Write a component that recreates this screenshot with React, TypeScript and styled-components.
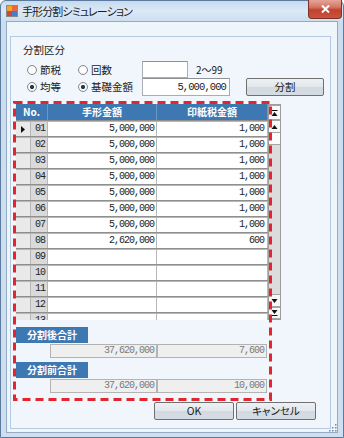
import React from "react";
import styled, { createGlobalStyle } from "styled-components";

const GlobalStyle = createGlobalStyle`
  html, body { margin: 0; padding: 0; background: #ffffff; }
  body { font-family: "Noto Sans CJK JP", "Noto Sans", sans-serif; }
  * { box-sizing: border-box; }
`;

const Window = styled.div`
  width: 344px;
  height: 438px;
  border: 1px solid #5d7b9c;
  border-radius: 6px 6px 0 0;
  background: linear-gradient(180deg, #c6daee 0px, #dce9f6 10px, #cbddef 21px, #cfdff0 100%);
  display: flex;
  flex-direction: column;
  padding: 0 5px 4px 5px;
`;

const TitleBar = styled.div`
  height: 20px;
  display: flex;
  align-items: center;
`;

const TitleText = styled.div`
  margin-left: 4px;
  font-size: 11px;
  line-height: 14px;
  letter-spacing: -0.9px;
  color: #1b1b1b;
  font-feature-settings: "palt";
`;

const CloseButton = styled.div`
  margin-left: auto;
  margin-right: -4px;
  align-self: flex-start;
  margin-top: -1px;
  width: 34px;
  height: 19px;
  border: 1px solid #7b3327;
  border-top: none;
  border-radius: 0 0 4px 4px;
  background: linear-gradient(180deg, #e6a596 0%, #d47665 40%, #c2412f 55%, #c9533e 100%);
  display: flex;
  align-items: center;
  justify-content: center;
`;

const Client = styled.div`
  flex: 1;
  position: relative;
  border: 1px solid #93abc5;
  background: #eef5fb;
  padding: 14px 6px 3px 3px;
  display: flex;
`;

const Panel = styled.div`
  flex: 1;
  border: 1px solid #b3cae2;
  background: #f0f6fc;
  display: flex;
  flex-direction: column;
`;

const GroupLabel = styled.div`
  margin: 6px 0 0 12px;
  font-size: 10.5px;
  line-height: 14px;
  color: #1b1b1b;
`;

const OptionRow = styled.div<{ $h: number; $top?: number }>`
  display: flex;
  align-items: center;
  height: ${(p) => p.$h}px;
  margin: ${(p) => p.$top ?? 0}px 0 0 16px;
`;

const Radio = styled.div<{ $w: number }>`
  width: ${(p) => p.$w}px;
  display: flex;
  align-items: center;
  gap: 3px;
  font-size: 10.5px;
  line-height: 14px;
  color: #1b1b1b;
`;

const RadioMark = styled.span<{ $checked?: boolean }>`
  width: 10px;
  height: 10px;
  border-radius: 50%;
  border: 1px solid #8a8a8a;
  background: ${(p) =>
    p.$checked
      ? "radial-gradient(circle, #24384f 0 1.8px, #ffffff 2.4px, #e4e4e4 100%)"
      : "radial-gradient(circle, #ffffff 40%, #e4e4e4 100%)"};
`;

const TextBox = styled.div<{ $w: number; $h: number }>`
  width: ${(p) => p.$w}px;
  height: ${(p) => p.$h}px;
  border: 1px solid #abadb3;
  border-top-color: #8f9196;
  background: #ffffff;
  font-family: "Liberation Mono", monospace;
  font-size: 10.5px;
  letter-spacing: -0.9px;
  line-height: ${(p) => p.$h - 2}px;
  text-align: right;
  padding-right: 3px;
  color: #1b1b1b;
`;

const Hint = styled.div`
  margin-left: 8px;
  font-size: 10px;
  color: #1b1b1b;
`;

const Button = styled.div<{ $w: number; $ml?: number }>`
  width: ${(p) => p.$w}px;
  height: 18px;
  margin-left: ${(p) => p.$ml ?? 0}px;
  border: 1px solid #707070;
  border-radius: 2px;
  background: linear-gradient(180deg, #eef1f4 0%, #e2e7ec 50%, #d3d9e0 51%, #d6dce3 100%);
  font-size: 10.5px;
  line-height: 16px;
  text-align: center;
  color: #1b1b1b;
  font-feature-settings: "palt";
`;

const DataArea = styled.div`
  position: relative;
  margin: 8px 0 0 5px;
  display: flex;
  flex-direction: column;
`;

const GridWrap = styled.div`
  display: flex;
  height: 216px;
`;

const Table = styled.div`
  width: 252px;
  height: 216px;
  overflow: hidden;
  background: #ffffff;
`;

const HeaderRow = styled.div`
  display: grid;
  grid-template-columns: 31px 108px 110px;
  column-gap: 1px;
  height: 16px;
  background: #6d97c3;
`;

const HeaderCell = styled.div`
  background: #3e78b3;
  color: #ffffff;
  font-weight: bold;
  font-size: 10px;
  line-height: 16px;
  text-align: center;
`;

const Row = styled.div`
  display: grid;
  grid-template-columns: 14px 16px 108px 110px;
  column-gap: 1px;
  height: 16px;
  border-top: 1px solid #8f8f8f;
  padding-top: 1px;
  background: #b7b7b7;
`;

const Indicator = styled.div`
  background: #e9e9e9;
  display: flex;
  align-items: center;
  justify-content: center;
`;

const NoCell = styled.div`
  background: #dadada;
  font-family: "Liberation Mono", monospace;
  font-size: 10px;
  letter-spacing: -1px;
  line-height: 14px;
  padding-left: 4px;
  color: #222222;
`;

const AmountCell = styled.div<{ $pad: number }>`
  background: #ffffff;
  font-family: "Liberation Mono", monospace;
  font-size: 10px;
  letter-spacing: -1px;
  line-height: 14px;
  text-align: right;
  padding-right: ${(p) => p.$pad}px;
  color: #222222;
`;

const ScrollBar = styled.div`
  width: 13px;
  height: 216px;
  border: 1px solid #9c9c9c;
  background: #dcdcdc;
  display: flex;
  flex-direction: column;
`;

const ScrollButton = styled.div<{ $h: number }>`
  height: ${(p) => p.$h}px;
  border-bottom: 1px solid #a6a6a6;
  border-top: 1px solid #a6a6a6;
  background: #f7f7f7;
  display: flex;
  align-items: center;
  justify-content: center;
`;

const ScrollThumb = styled.div`
  height: 12px;
  background: #fbfbfb;
  border-bottom: 1px solid #a6a6a6;
`;

const ScrollTrack = styled.div`
  flex: 1;
`;

const TotalLabel = styled.div<{ $top: number }>`
  width: 72px;
  height: 16px;
  margin-top: ${(p) => p.$top}px;
  background: #3e78b3;
  color: #ffffff;
  font-weight: bold;
  font-size: 10px;
  line-height: 16px;
  text-align: center;
`;

const TotalRow = styled.div`
  display: flex;
  margin: 1px 0 0 34px;
`;

const TotalBox = styled.div<{ $w: number }>`
  width: ${(p) => p.$w}px;
  height: 14px;
  border: 1px solid #b3b3b3;
  background: #efefef;
  font-family: "Liberation Mono", monospace;
  font-size: 10px;
  letter-spacing: -1px;
  line-height: 12px;
  text-align: right;
  padding-right: 2px;
  color: #7a7a7a;
`;

const DashedFrame = styled.svg`
  position: absolute;
  left: -3px;
  top: -3px;
  pointer-events: none;
`;

const ButtonRow = styled.div`
  display: flex;
  justify-content: flex-end;
  gap: 2px;
  margin-top: 9px;
  padding-right: 14px;
`;

const Grip = styled.svg`
  position: absolute;
  right: 0;
  bottom: 0;
`;

const rows: [string, string, string][] = [
  ["01", "5,000,000", "1,000"],
  ["02", "5,000,000", "1,000"],
  ["03", "5,000,000", "1,000"],
  ["04", "5,000,000", "1,000"],
  ["05", "5,000,000", "1,000"],
  ["06", "5,000,000", "1,000"],
  ["07", "5,000,000", "1,000"],
  ["08", "2,620,000", "600"],
  ["09", "", ""],
  ["10", "", ""],
  ["11", "", ""],
  ["12", "", ""],
  ["13", "", ""],
];

function AppIcon() {
  return (
    <svg width="12" height="12" viewBox="0 0 12 12">
      <rect x="0.5" y="0.5" width="11" height="11" fill="#f4f4f4" stroke="#8a8a8a" />
      <rect x="1" y="1" width="5" height="5" fill="#f2a81d" />
      <rect x="6" y="1" width="5" height="5" fill="#e9683a" />
      <rect x="1" y="6" width="5" height="5" fill="#d9423b" />
      <rect x="6" y="6" width="5" height="5" fill="#3f7fd4" />
    </svg>
  );
}

function ScrollGlyph({ dir, bar }: { dir: "up" | "down"; bar?: boolean }) {
  const up = dir === "up";
  return (
    <svg width="7" height="6" viewBox="0 0 7 6">
      {up ? <polygon points="3.5,1 6.5,5 0.5,5" fill="#111" transform={bar ? "translate(0,1)" : ""} /> : <polygon points="0.5,1 6.5,1 3.5,5" fill="#111" transform={bar ? "translate(0,-1)" : ""} />}
      {bar && (up ? <rect x="0.5" y="0" width="6" height="1" fill="#111" /> : <rect x="0.5" y="5" width="6" height="1" fill="#111" />)}
    </svg>
  );
}

export default function App() {
  return (
    <>
      <GlobalStyle />
      <Window>
        <TitleBar>
          <AppIcon />
          <TitleText>手形分割シミュレーション</TitleText>
          <CloseButton>
            <svg width="9" height="8" viewBox="0 0 9 8">
              <path d="M1 0.5 L8 7.5 M8 0.5 L1 7.5" stroke="#ffffff" strokeWidth="2" />
            </svg>
          </CloseButton>
        </TitleBar>
        <Client>
          <Panel>
            <GroupLabel>分割区分</GroupLabel>
            <OptionRow $h={17} $top={4}>
              <Radio $w={51}><RadioMark />節税</Radio>
              <Radio $w={64}><RadioMark />回数</Radio>
              <TextBox $w={46} $h={17}></TextBox>
              <Hint>2～99</Hint>
            </OptionRow>
            <OptionRow $h={18}>
              <Radio $w={51}><RadioMark $checked />均等</Radio>
              <Radio $w={64}><RadioMark $checked />基礎金額</Radio>
              <TextBox $w={88} $h={18}>5,000,000</TextBox>
              <Button $w={78} $ml={16}>分割</Button>
            </OptionRow>
            <DataArea>
              <GridWrap>
                <Table>
                  <HeaderRow>
                    <HeaderCell>No.</HeaderCell>
                    <HeaderCell>手形金額</HeaderCell>
                    <HeaderCell>印紙税金額</HeaderCell>
                  </HeaderRow>
                  {rows.map(([no, amount, tax], i) => (
                    <Row key={no}>
                      <Indicator>
                        {i === 0 && (
                          <svg width="4" height="7" viewBox="0 0 4 7">
                            <polygon points="0,0 4,3.5 0,7" fill="#111" />
                          </svg>
                        )}
                      </Indicator>
                      <NoCell>{no}</NoCell>
                      <AmountCell $pad={2}>{amount}</AmountCell>
                      <AmountCell $pad={3}>{tax}</AmountCell>
                    </Row>
                  ))}
                </Table>
                <ScrollBar>
                  <ScrollButton $h={15}><ScrollGlyph dir="up" bar /></ScrollButton>
                  <ScrollButton $h={13}><ScrollGlyph dir="up" /></ScrollButton>
                  <ScrollThumb />
                  <ScrollTrack />
                  <ScrollButton $h={13}><ScrollGlyph dir="down" /></ScrollButton>
                  <ScrollButton $h={12}><ScrollGlyph dir="down" bar /></ScrollButton>
                </ScrollBar>
              </GridWrap>
              <TotalLabel $top={7}>分割後合計</TotalLabel>
              <TotalRow>
                <TotalBox $w={107}>37,620,000</TotalBox>
                <TotalBox $w={110}>7,600</TotalBox>
              </TotalRow>
              <TotalLabel $top={4}>分割前合計</TotalLabel>
              <TotalRow>
                <TotalBox $w={107}>37,620,000</TotalBox>
                <TotalBox $w={110}>10,000</TotalBox>
              </TotalRow>
              <DashedFrame width="260" height="301" viewBox="0 0 260 301">
                <rect x="1.5" y="1.5" width="256" height="297" fill="none" stroke="#e3262d" strokeWidth="3" strokeDasharray="8 5" />
              </DashedFrame>
            </DataArea>
            <ButtonRow>
              <Button $w={80}>OK</Button>
              <Button $w={80}>キャンセル</Button>
            </ButtonRow>
          </Panel>
          <Grip width="10" height="10" viewBox="0 0 10 10">
            {[[8, 2], [8, 5], [5, 5], [8, 8], [5, 8], [2, 8]].map(([x, y]) => (
              <rect key={`${x}-${y}`} x={x} y={y} width="1.5" height="1.5" fill="#6f8aa8" />
            ))}
          </Grip>
        </Client>
      </Window>
    </>
  );
}
